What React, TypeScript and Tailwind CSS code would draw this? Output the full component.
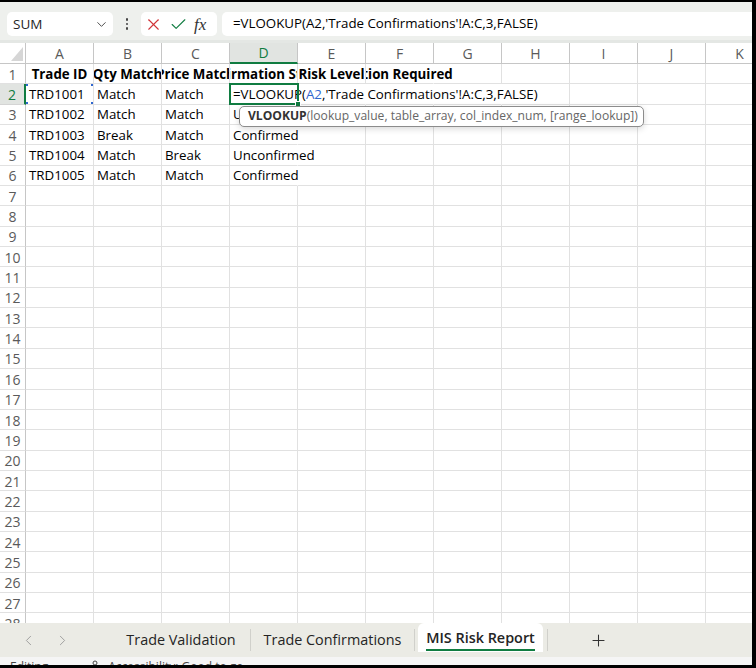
import { Check, ChevronDown, ChevronLeft, ChevronRight, Plus, X } from 'lucide-react';
import type { ReactNode } from 'react';

const FONT = "font-['Segoe_UI','Open_Sans',sans-serif]";

type CellDef = {
  text?: ReactNode;
  bold?: boolean;
  center?: boolean;
  open?: boolean; // gridline hidden on the right (text overflow)
  spill?: boolean; // text runs on into the next cell
  active?: boolean;
  ref?: boolean;
};

const COLS = ['A', 'B', 'C', 'D', 'E', 'F', 'G', 'H', 'I', 'J', 'K'];

const formula = (
  <>
    =VLOOKUP(<span className="text-[#2f66cf]">A2</span>,'Trade Confirmations'!A:C,3,FALSE)
  </>
);

const data: Record<number, CellDef[]> = {
  1: [
    { text: 'Trade ID', bold: true, center: true },
    { text: 'Qty Match', bold: true, center: true },
    { text: 'Price Match', bold: true, center: true },
    { text: 'Confirmation Status', bold: true, center: true },
    { text: 'Risk Level', bold: true, center: true },
    { text: 'Action Required', bold: true, center: true, spill: true, open: true },
  ],
  2: [
    { text: 'TRD1001', ref: true },
    { text: 'Match' },
    { text: 'Match' },
    { text: formula, spill: true, active: true },
    { open: true },
    { open: true },
    { open: true },
  ],
  3: [{ text: 'TRD1002' }, { text: 'Match' }, { text: 'Match' }, { text: 'Unconfirmed', spill: true, open: true }],
  4: [{ text: 'TRD1003' }, { text: 'Break' }, { text: 'Match' }, { text: 'Confirmed', spill: true, open: true }],
  5: [{ text: 'TRD1004' }, { text: 'Match' }, { text: 'Break' }, { text: 'Unconfirmed', spill: true, open: true }],
  6: [{ text: 'TRD1005' }, { text: 'Match' }, { text: 'Match' }, { text: 'Confirmed', spill: true, open: true }],
};

function Cell({ cell }: { cell: CellDef }) {
  const border = cell.open ? 'border-r border-r-transparent' : 'border-r border-r-[#e1e1e1]';
  const clip = cell.spill
    ? cell.center
      ? 'overflow-visible [clip-path:inset(-2px_-200px_-2px_0)]'
      : 'overflow-visible z-10'
    : 'overflow-hidden';
  return (
    <div
      className={`relative flex h-full w-[68px] shrink-0 items-center border-b border-b-[#e1e1e1] pt-[2px] ${border} ${clip} ${
        cell.center ? 'justify-center' : 'justify-start pl-[3px]'
      } ${cell.bold ? 'font-bold' : ''}`}
    >
      <span className="shrink-0 whitespace-nowrap">{cell.text}</span>
      {cell.active && (
        <div className="absolute -left-[1px] -top-[1px] h-[calc(100%+2px)] w-[70px] border-2 border-[#107c41]">
          <div className="absolute -bottom-[4px] -right-[4px] h-[6px] w-[6px] border border-white bg-[#107c41]" />
        </div>
      )}
      {cell.ref && (
        <div className="absolute -left-[1px] -top-[1px] h-[calc(100%+2px)] w-[69px] border-[1.5px] border-[#2f66cf]">
          <div className="absolute -left-[3px] -top-[3px] h-[5px] w-[5px] bg-[#2f66cf]" />
          <div className="absolute -right-[3px] -top-[3px] h-[5px] w-[5px] bg-[#2f66cf]" />
          <div className="absolute -bottom-[3px] -left-[3px] h-[5px] w-[5px] bg-[#2f66cf]" />
          <div className="absolute -bottom-[3px] -right-[3px] h-[5px] w-[5px] bg-[#2f66cf]" />
        </div>
      )}
    </div>
  );
}

function Row({ n }: { n: number }) {
  const cells = data[n] ?? [];
  const selected = n === 2;
  return (
    <div className="flex h-[20.35px] shrink-0">
      <div
        className={`flex h-full w-[26px] shrink-0 items-center justify-center border-b pt-[1px] text-[14px] ${
          selected
            ? 'border-b-[#d4d4d4] border-r-2 border-r-[#107c41] bg-[#e1e4e1] text-[#107c41]'
            : 'border-b-[#e1e1e1] border-r border-r-[#c6c6c6] text-[#5a5a5a]'
        }`}
      >
        {n}
      </div>
      {COLS.map((c, i) => (
        <Cell key={c} cell={cells[i] ?? {}} />
      ))}
    </div>
  );
}

export default function App() {
  const rows = Array.from({ length: 28 }, (_, i) => i + 1);

  return (
    <div
      className={`${FONT} h-[668px] w-[756px] overflow-hidden border-b-[3px] border-r-4 border-t-2 border-black bg-white text-[13.3px] text-black`}
    >
      <div className="flex h-full flex-col">
        {/* formula bar */}
        <div className="flex h-[41px] shrink-0 items-start gap-[5px] border-b-[3px] border-b-[#e4e7e4] bg-[#eef0ed] pl-[7px] pt-[10px]">
          <div className="flex h-[24px] w-[106px] items-center justify-between rounded-[5px] bg-white pl-[6px] pr-[4px] text-[13.5px] text-[#262626]">
            <span>SUM</span>
            <ChevronDown size={15} strokeWidth={1.5} className="text-[#444]" />
          </div>
          <div className="flex h-[24px] w-[18px] flex-col items-center justify-center gap-[2px]">
            <span className="h-[2.5px] w-[2.5px] rounded-full bg-[#444]" />
            <span className="h-[2.5px] w-[2.5px] rounded-full bg-[#444]" />
            <span className="h-[2.5px] w-[2.5px] rounded-full bg-[#444]" />
          </div>
          <div className="flex h-[24px] w-[76px] items-center gap-[6px] rounded-[5px] bg-white pl-[3px]">
            <X size={19} strokeWidth={1.4} className="text-[#d13438]" />
            <Check size={19} strokeWidth={1.4} className="text-[#107c41]" />
            <span className="font-['Liberation_Serif',serif] text-[17px] italic leading-none text-[#333]">fx</span>
          </div>
          <div className="flex h-[24px] flex-1 items-center rounded-l-[5px] bg-white pl-[11px]">
            <span className="whitespace-nowrap">=VLOOKUP(A2,'Trade Confirmations'!A:C,3,FALSE)</span>
          </div>
        </div>

        {/* grid */}
        <div className="relative flex-1 overflow-hidden">
          <div className="flex h-[21px] shrink-0">
            <div className="flex h-full w-[26px] shrink-0 items-end justify-end border-b border-r border-[#c6c6c6] pb-[2px] pr-[2px]">
              <svg width="12" height="14" viewBox="0 0 12 14">
                <polygon points="12,0 12,14 0,14" fill="#d6d6d6" />
              </svg>
            </div>
            {COLS.map((c) => (
              <div
                key={c}
                className={`flex h-full w-[68px] shrink-0 items-center justify-center text-[14px] ${
                  c === 'D'
                    ? 'border-b-2 border-r border-b-[#107c41] border-r-[#c6c6c6] bg-[#e1e4e1] text-[#107c41]'
                    : 'border-b border-r border-[#c6c6c6] text-[#5a5a5a]'
                }`}
              >
                {c}
              </div>
            ))}
          </div>
          {rows.map((n) => (
            <Row key={n} n={n} />
          ))}

          {/* function tooltip */}
          <div className="absolute left-[239px] top-[63px] z-20 flex h-[21px] w-[405px] items-center rounded-[5px] border border-[#8c8c8c] bg-white pl-[8px] text-[12.1px] shadow-[0_2px_6px_rgba(0,0,0,0.15)]">
            <span className="whitespace-nowrap">
              <span className="font-bold text-[#333]">VLOOKUP</span>
              <span className="text-[#666]">(lookup_value, table_array, col_index_num, [range_lookup])</span>
            </span>
          </div>
        </div>

        {/* sheet tabs */}
        <div className="flex h-[34px] shrink-0 items-stretch bg-[#ebebe5] text-[14.4px] text-[#242424]">
          <div className="flex w-[112px] shrink-0 items-center pl-[20px] text-[#9a9a9a]">
            <ChevronLeft size={17} strokeWidth={1.3} />
            <ChevronRight size={17} strokeWidth={1.3} className="ml-[17px]" />
          </div>
          <div className="flex w-[138px] shrink-0 items-center justify-center whitespace-nowrap">Trade Validation</div>
          <div className="my-[6px] w-px bg-[#d0d0cb]" />
          <div className="flex w-[163px] shrink-0 items-center justify-center whitespace-nowrap">Trade Confirmations</div>
          <div className="my-[6px] w-px bg-[#d0d0cb]" />
          <div className="mb-[5px] ml-[3px] flex w-[125px] shrink-0 flex-col items-center justify-center rounded-t-[6px] bg-white">
            <span className="whitespace-nowrap border-b-[2.5px] border-[#107c41] pt-[2px] font-semibold leading-[22px]">
              MIS Risk Report
            </span>
          </div>
          <div className="my-[6px] ml-[4px] w-px bg-[#d0d0cb]" />
          <div className="flex w-[100px] shrink-0 items-center justify-center text-[#333]">
            <Plus size={19} strokeWidth={1.3} />
          </div>
        </div>

        {/* status bar (mostly cut off) */}
        <div className="h-[8px] shrink-0 overflow-hidden bg-[#f5f5f5] text-[12px] text-[#444]">
          <div className="flex items-center gap-[6px] pl-[10px] pt-[3px] leading-[14px]">
            <span>Editing</span>
            <svg width="14" height="14" viewBox="0 0 14 14" className="ml-[34px]" fill="none" stroke="#444">
              <circle cx="7" cy="3" r="2" />
              <path d="M2 6h10M7 6v7M4 13l3-4 3 4" />
            </svg>
            <span>Accessibility: Good to go</span>
          </div>
        </div>
      </div>
    </div>
  );
}
